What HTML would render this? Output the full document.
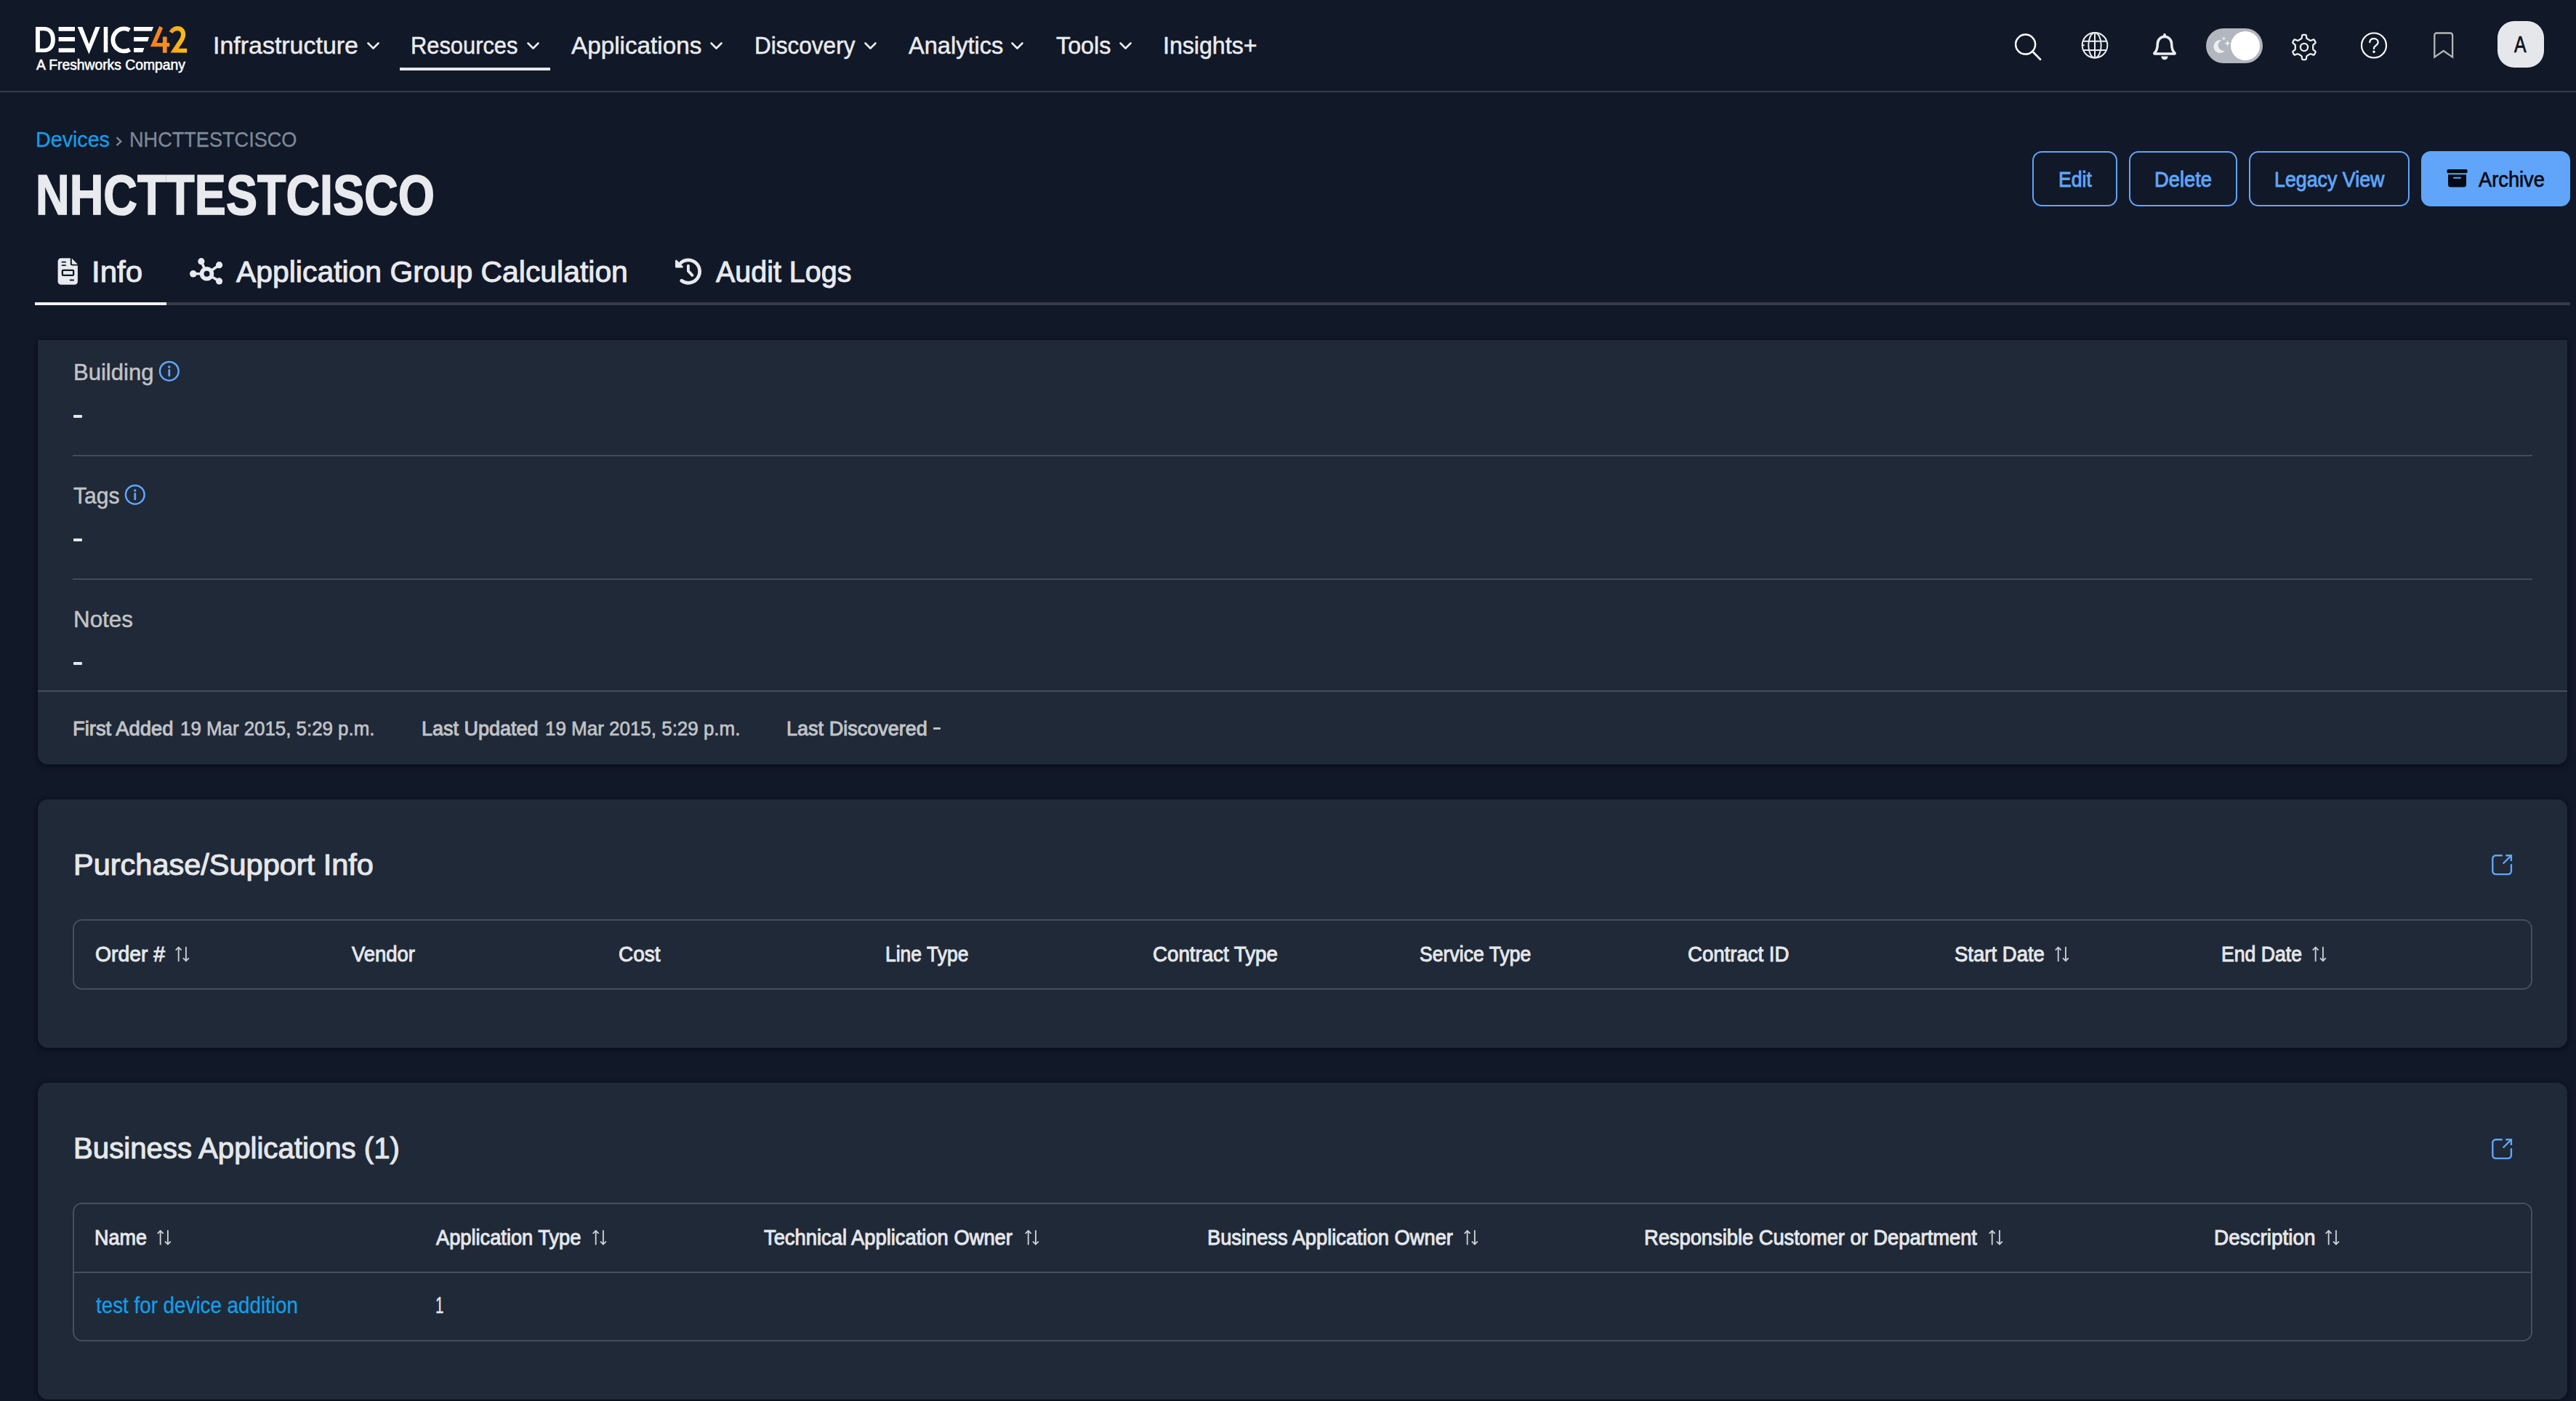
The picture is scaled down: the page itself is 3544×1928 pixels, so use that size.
<!DOCTYPE html>
<html lang="en"><head><meta charset="utf-8"><title>NHCTTESTCISCO - Device42</title>
<style>
html,body{margin:0;padding:0;}
body{width:3544px;height:1928px;overflow:hidden;position:relative;background:#111827;font-family:"Liberation Sans",sans-serif;}
.t{position:absolute;white-space:nowrap;transform-origin:0 50%;display:block;font-family:"Liberation Sans",sans-serif;}
.a{position:absolute;display:block;}
svg{position:absolute;overflow:visible;display:block;}
.card{position:absolute;left:52px;width:3480px;background:#1f2937;box-shadow:0 3px 9px rgba(3,7,18,.5),0 0 5px rgba(3,7,18,.22);}
.hr{position:absolute;height:2px;background:#434b5a;}
.tbl{position:absolute;left:100px;width:3384px;box-sizing:border-box;border:2px solid #464e5d;border-radius:13px;}
.btn{position:absolute;top:208px;height:76px;box-sizing:border-box;border:2px solid #60a5fa;border-radius:13px;}
.dash{position:absolute;left:101px;width:12px;height:4px;background:#e5e7eb;border-radius:1px;}

</style></head><body>
<!-- header -->
<div class="a" style="left:0;top:0;width:3544px;height:125px;background:#111827;border-bottom:2px solid #353b4a;"></div>
<!-- logo -->
<svg id="logo" style="left:49px;top:36px" width="210" height="40" viewBox="0 0 210 40">
 <defs><linearGradient id="lg" gradientUnits="userSpaceOnUse" x1="158" y1="0" x2="208" y2="0"><stop offset="0" stop-color="#f47a22"/><stop offset="0.5" stop-color="#f7941d"/><stop offset="0.62" stop-color="#f9a61a"/><stop offset="1" stop-color="#fdc30e"/></linearGradient></defs>
 <g fill="#fff">
  <path fill-rule="evenodd" d="M0 0.900H11.500C21.500 0.900 26.900 7.800 26.900 18.500C26.900 29.200 21.500 36.100 11.500 36.100H0ZM5.900 6.200V30.700H11.300C17.600 30.700 21 26 21 18.400C21 10.800 17.600 6.200 11.300 6.200Z"/>
  <rect x="31.600" y="1" width="22.400" height="5.800"/><rect x="31.600" y="15" width="22.400" height="5.900"/><rect x="31.600" y="30.300" width="22.400" height="5.800"/>
  <path d="M57.600 1H64.400L73.400 24.400L82.400 1H88.800L73.400 38.500Z"/>
  <rect x="93.700" y="1" width="5.600" height="35.100"/>
  <path d="M129.300 5.500A15.300 15.500 0 1 0 129.600 32.200" fill="none" stroke="#fff" stroke-width="5.800"/>
  <path d="M135.100 1H162.050L159.900 6.850H135.100Z"/><path d="M135.100 15.050H156L154.200 20.950H135.100Z"/><path d="M135.100 30.100H149.400L147.400 36.100H135.100Z"/>
 </g>
 <g fill="url(#lg)">
 <path d="M170.300 -0.300L175.100 2.400L166.300 22.900H174.900V14.500H180.600V22.900H184.200V28.300H180.600V36.800H174.900V28.300H157.900Z"/>
 <path d="M183.800 7.200C186.300 2.600 190.300 -0.100 195.400 -0.100C201.800 -0.100 206.200 4.600 206.200 11.200C206.200 15.600 204.300 19.400 201.200 24L196.600 30.800H208.100V36.600H185.400L196 20.500C198.600 16.800 200 14.200 200 11.400C200 8.200 198 6.200 194.900 6.200C192.100 6.200 190 7.600 188.500 10.100Z"/>
 </g>
</svg>
<!-- nav chevrons -->
<svg style="left:505px;top:58px" width="17" height="11" viewBox="0 0 17 11"><path d="M1.500 1.500l7 7 7-7" fill="none" stroke="#eceef1" stroke-width="2.600" stroke-linecap="round" stroke-linejoin="round"/></svg>
<svg style="left:724.500px;top:58px" width="17" height="11" viewBox="0 0 17 11"><path d="M1.500 1.500l7 7 7-7" fill="none" stroke="#eceef1" stroke-width="2.600" stroke-linecap="round" stroke-linejoin="round"/></svg>
<svg style="left:977px;top:58px" width="17" height="11" viewBox="0 0 17 11"><path d="M1.500 1.500l7 7 7-7" fill="none" stroke="#eceef1" stroke-width="2.600" stroke-linecap="round" stroke-linejoin="round"/></svg>
<svg style="left:1188.500px;top:58px" width="17" height="11" viewBox="0 0 17 11"><path d="M1.500 1.500l7 7 7-7" fill="none" stroke="#eceef1" stroke-width="2.600" stroke-linecap="round" stroke-linejoin="round"/></svg>
<svg style="left:1390.500px;top:58px" width="17" height="11" viewBox="0 0 17 11"><path d="M1.500 1.500l7 7 7-7" fill="none" stroke="#eceef1" stroke-width="2.600" stroke-linecap="round" stroke-linejoin="round"/></svg>
<svg style="left:1540px;top:58px" width="17" height="11" viewBox="0 0 17 11"><path d="M1.500 1.500l7 7 7-7" fill="none" stroke="#eceef1" stroke-width="2.600" stroke-linecap="round" stroke-linejoin="round"/></svg>
<!-- active nav underline -->
<div class="a" style="left:550px;top:93px;width:207px;height:4px;background:#e5e7eb;"></div>
<!-- header icons -->
<svg id="ic-search" style="left:2770px;top:44px" width="40" height="40" viewBox="0 0 40 40"><circle cx="16.600" cy="17.100" r="13.500" fill="none" stroke="#fff" stroke-width="2.500"/><path d="M26.300 26.800L37 37.700" stroke="#fff" stroke-width="2.700" stroke-linecap="round"/></svg>
<svg id="ic-globe" style="left:2863px;top:43px" width="38" height="38" viewBox="0 0 38 38"><g fill="none" stroke="#eceef1" stroke-width="2"><circle cx="19" cy="19.200" r="17.300"/><ellipse cx="19" cy="19.200" rx="8.700" ry="17.300"/><path d="M19 1.900v34.600M2.8 13.8h32.4M2.8 25.9h32.4M1.700 19.200h3"/></g></svg>
<svg id="ic-bell" style="left:2961px;top:45px" width="34" height="38" viewBox="0 0 34 38"><path d="M17 5.600c-5.800 0-9.700 4.300-9.700 10.100 0 6-1.300 9.500-4.300 12.300-.4.400-.1 1.100.5 1.100h27c.6 0 .9-.7.500-1.100-3-2.800-4.300-6.300-4.300-12.300 0-5.800-3.900-10.100-9.700-10.100z" fill="none" stroke="#eceef1" stroke-width="3.500" stroke-linejoin="round"/><path d="M17 2.900v2" stroke="#eceef1" stroke-width="3.800" stroke-linecap="round"/><path d="M12.300 32.600h9.400a4.700 4.700 0 0 1-9.400 0z" fill="#eceef1"/></svg>
<div class="a" style="left:3035px;top:39px;width:78px;height:48px;border-radius:24px;background:#b2b6be;"></div>
<div class="a" style="left:3069px;top:43px;width:40px;height:40px;border-radius:20px;background:#fff;"></div>
<svg id="ic-moon" style="left:3043.6px;top:48.5px" width="30" height="28" viewBox="0 0 30 28"><path d="M12.500 6.400A8.900 8.900 0 1 0 17.300 20.600 7.500 7.500 0 0 1 12.500 6.400z" fill="#eceef1"/><path d="M15.500 1l.8 2.200 2.200.8-2.200.8-.8 2.200-.8-2.200-2.200-.8 2.200-.8zM20.500 6.200l1.200 3.200 3.200 1.200-3.200 1.200-1.200 3.200-1.200-3.200-3.200-1.200 3.200-1.200z" fill="#eceef1"/></svg>
<svg id="ic-gear" style="left:3152px;top:46px" width="36" height="38" viewBox="-18 -19 36 38"><path id="gearp" d="M-4.39 -11.52Q-3.26 -12.17 -3.14 -13.46L-2.92 -15.78Q-2.80 -17.07 -1.50 -17.07L1.50 -17.07Q2.80 -17.07 2.92 -15.78L3.14 -13.46Q3.26 -12.17 4.39 -11.52L7.78 -9.56Q8.91 -8.91 10.09 -9.45L12.21 -10.42Q13.39 -10.96 14.04 -9.83L15.53 -7.24Q16.18 -6.12 15.12 -5.36L13.23 -4.01Q12.17 -3.26 12.17 -1.96L12.17 1.96Q12.17 3.26 13.23 4.01L15.12 5.36Q16.18 6.12 15.53 7.24L14.04 9.83Q13.39 10.96 12.21 10.42L10.09 9.45Q8.91 8.91 7.78 9.56L4.39 11.52Q3.26 12.17 3.14 13.46L2.92 15.78Q2.80 17.07 1.50 17.07L-1.50 17.07Q-2.80 17.07 -2.92 15.78L-3.14 13.46Q-3.26 12.17 -4.39 11.52L-7.78 9.56Q-8.91 8.91 -10.09 9.45L-12.21 10.42Q-13.39 10.96 -14.04 9.83L-15.53 7.24Q-16.18 6.12 -15.12 5.36L-13.23 4.01Q-12.17 3.26 -12.17 1.96L-12.17 -1.96Q-12.17 -3.26 -13.23 -4.01L-15.12 -5.36Q-16.18 -6.12 -15.53 -7.24L-14.04 -9.83Q-13.39 -10.96 -12.21 -10.42L-10.09 -9.45Q-8.91 -8.91 -7.78 -9.56Z" fill="none" stroke="#eceef1" stroke-width="2.300" stroke-linejoin="round"/><circle cx="0" cy="0" r="5.1" fill="none" stroke="#eceef1" stroke-width="2.3"/></svg>
<svg id="ic-help" style="left:3247px;top:44px" width="38" height="38" viewBox="0 0 38 38"><circle cx="19" cy="18.500" r="17" fill="none" stroke="#fff" stroke-width="2.200"/><path d="M13.200 14.200c.3-3 2.600-5 5.800-5 3.300 0 5.700 2 5.700 4.900 0 2.300-1.300 3.500-3.100 4.600-1.800 1.100-2.600 2-2.600 3.800v.6" fill="none" stroke="#fff" stroke-width="2.200" stroke-linecap="round"/><circle cx="19" cy="27.300" r="1.700" fill="#fff"/></svg>
<svg id="ic-bm" style="left:3347px;top:43px" width="30" height="40" viewBox="0 0 30 40"><path d="M2.3 35.6V5.5a3 3 0 0 1 3-3h18.800a3 3 0 0 1 3 3v30.1l-12.4-8.6z" fill="none" stroke="#b5b5b5" stroke-width="2.300" stroke-linejoin="miter"/></svg>
<div class="a" style="left:3436px;top:29px;width:64px;height:64px;border-radius:23px;background:#e5e7eb;"></div>

<svg style="left:158px;top:187px" width="12" height="16" viewBox="0 0 12 16"><path d="M2.500 2.200l5.900 5.500-5.900 5.500" fill="none" stroke="#7c8a97" stroke-width="2.300"/></svg>
<!-- buttons -->
<div class="btn" style="left:2796px;width:117px;"></div>
<div class="btn" style="left:2929px;width:149px;"></div>
<div class="btn" style="left:3094px;width:221px;"></div>
<div class="btn" style="left:3331px;width:205px;background:#60a5fa;"></div>
<svg id="ic-arch" style="left:3366px;top:232px" width="30" height="27" viewBox="0 0 30 27"><rect x="0.400" y="1" width="28.200" height="5.300" rx="1.800" fill="#050a16"/><path d="M2 8.300h25v13.700a3.500 3.500 0 0 1-3.500 3.500h-18a3.500 3.500 0 0 1-3.500-3.500zM10 11.700a1 1 0 0 0 0 2h9a1 1 0 0 0 0-2z" fill="#050a16" fill-rule="evenodd"/></svg>

<!-- tabs -->
<div class="a" style="left:48px;top:416px;width:3488px;height:4px;background:#353b4a;"></div>
<div class="a" style="left:48px;top:416px;width:181px;height:4px;background:#f0f1f3;"></div>
<svg id="ic-file" style="left:79px;top:355px" width="29" height="37" viewBox="0 0 29 37"><path fill-rule="evenodd" fill="#e8eaee" d="M5 0.200h12.800v7.600a2.600 2.600 0 0 0 2.600 2.600h7.500v22a4.400 4.400 0 0 1-4.400 4.400H5a4.400 4.400 0 0 1-4.400-4.400V4.600A4.400 4.400 0 0 1 5 0.200zM6.500 4.800a.9.900 0 0 0 0 1.800h4.600a.9.900 0 0 0 0-1.800zM6.500 9.200a.9.900 0 0 0 0 1.800h4.600a.9.900 0 0 0 0-1.800zM8 15.800a2.300 2.300 0 0 0-2.300 2.300v4.600A2.300 2.300 0 0 0 8 25h13a2.300 2.300 0 0 0 2.300-2.300v-4.600a2.300 2.300 0 0 0-2.300-2.300zM8 18.100h13v4.600H8zM17.600 29.600a.9.900 0 0 0 0 1.800h4.600a.9.900 0 0 0 0-1.800z"/><path fill="#e8eaee" d="M19.800 0.600l8 8.100h-6.600a1.400 1.400 0 0 1-1.400-1.400z"/></svg>
<svg id="ic-nodes" style="left:260px;top:354px" width="48" height="39" viewBox="0 0 48 39"><g stroke="#e8eaee" stroke-width="3.600" stroke-linecap="round"><path d="M24.500 22.800L16.900 5.700M24.500 22.800L41.600 10.700M24.500 22.800H5.800M24.500 22.800L41.600 32.900"/></g><circle cx="24.5" cy="22.8" r="6.9" fill="#111827" stroke="#e8eaee" stroke-width="5.8"/><g fill="#e8eaee"><circle cx="16.900" cy="5.700" r="4.600"/><circle cx="41.600" cy="10.700" r="4.600"/><circle cx="5.800" cy="22.800" r="4.800"/><circle cx="41.600" cy="32.900" r="4.600"/></g></svg>
<svg id="ic-hist" style="left:928px;top:354px" width="40" height="40" viewBox="0 0 40 40"><path d="M8.6 7.75A15.7 15.7 0 1 1 9.7 32.3" fill="none" stroke="#e8eaee" stroke-width="4.8" stroke-linecap="round"/><path d="M1 4.9a1.3 1.3 0 0 1 2.2-.9l8.400 8.400a1.3 1.3 0 0 1-.9 2.2H2.3A1.3 1.3 0 0 1 1 13.300z" fill="#e8eaee"/><path d="M18.9 11.8v7.100l5.500 5.900" fill="none" stroke="#e8eaee" stroke-width="3.900" stroke-linecap="round" stroke-linejoin="round"/></svg>

<!-- card 1 -->
<div class="card" style="top:468px;height:584px;border-radius:0 0 14px 14px;"></div>
<div class="hr" style="left:100px;top:626px;width:3384px;"></div>
<div class="hr" style="left:100px;top:796px;width:3384px;"></div>
<div class="hr" style="left:52px;top:950px;width:3480px;background:#474e5d"></div>
<div class="dash" style="top:570.500px"></div><div class="dash" style="top:740.500px"></div><div class="dash" style="top:910.500px"></div>
<div class="dash" style="left:1284.400px;top:1000.500px;width:9.500px;height:3.500px;background:#c1c3c8"></div>
<svg class="info" style="left:218px;top:496px" width="30" height="30" viewBox="0 0 30 30"><circle cx="14.800" cy="14.800" r="12.850" fill="none" stroke="#60a5fa" stroke-width="2.500"/><circle cx="14.800" cy="8.900" r="1.750" fill="#60a5fa"/><path d="M14.8 13.5v7.400" stroke="#60a5fa" stroke-width="2.8" stroke-linecap="round"/></svg>
<svg class="info" style="left:171.400px;top:666px" width="30" height="30" viewBox="0 0 30 30"><circle cx="14.800" cy="14.800" r="12.850" fill="none" stroke="#60a5fa" stroke-width="2.500"/><circle cx="14.800" cy="8.900" r="1.750" fill="#60a5fa"/><path d="M14.8 13.5v7.400" stroke="#60a5fa" stroke-width="2.8" stroke-linecap="round"/></svg>

<!-- card 2 -->
<div class="card" style="top:1100px;height:341.500px;border-radius:14px;"></div>
<div class="tbl" style="top:1265px;height:97px;"></div>
<svg class="ext" style="left:3428px;top:1176.2px" width="29" height="29" viewBox="0 0 29 29"><g fill="none" stroke="#60a5fa" stroke-width="2.4" stroke-linecap="butt" stroke-linejoin="round"><path d="M14.800 1.300H5.600A4.300 4.300 0 0 0 1.300 5.600V22.800a4.300 4.300 0 0 0 4.300 4.300H22.600a4.300 4.300 0 0 0 4.300-4.300V13.200"/><path d="M15.700 12.500L26.800 1.400" stroke-linecap="butt"/><path d="M19.300 1.300h7.600v7.600" stroke-linecap="butt" stroke-linejoin="miter"/></g></svg>

<!-- card 3 -->
<div class="card" style="top:1490.4px;height:436.1px;border-radius:14px;"></div>
<div class="tbl" style="top:1655px;height:191px;"></div>
<div class="hr" style="left:102px;top:1749.500px;width:3380px;background:#464e5d"></div>
<svg class="ext" style="left:3428px;top:1566.6px" width="29" height="29" viewBox="0 0 29 29"><g fill="none" stroke="#60a5fa" stroke-width="2.4" stroke-linecap="butt" stroke-linejoin="round"><path d="M14.800 1.300H5.600A4.300 4.300 0 0 0 1.300 5.600V22.800a4.300 4.300 0 0 0 4.300 4.300H22.600a4.300 4.300 0 0 0 4.300-4.300V13.200"/><path d="M15.700 12.500L26.800 1.400" stroke-linecap="butt"/><path d="M19.300 1.300h7.600v7.600" stroke-linecap="butt" stroke-linejoin="miter"/></g></svg>
<svg class="sort" style="left:241.2px;top:1302.3px" width="20" height="22" viewBox="0 0 20 22"><g fill="none" stroke="#c9cdd4" stroke-width="1.900" stroke-linecap="round" stroke-linejoin="round"><path d="M4.700 20.400V1.600M1.250 5.050l3.450-3.450 3.450 3.450"/><path d="M14.900 1.600v18.800M11.450 16.950l3.450 3.450 3.450-3.450"/></g></svg>
<svg class="sort" style="left:2826.6px;top:1302.3px" width="20" height="22" viewBox="0 0 20 22"><g fill="none" stroke="#c9cdd4" stroke-width="1.900" stroke-linecap="round" stroke-linejoin="round"><path d="M4.700 20.400V1.600M1.250 5.050l3.450-3.450 3.450 3.450"/><path d="M14.900 1.600v18.800M11.450 16.950l3.450 3.450 3.450-3.450"/></g></svg>
<svg class="sort" style="left:3181.4px;top:1302.3px" width="20" height="22" viewBox="0 0 20 22"><g fill="none" stroke="#c9cdd4" stroke-width="1.900" stroke-linecap="round" stroke-linejoin="round"><path d="M4.700 20.400V1.600M1.250 5.050l3.450-3.450 3.450 3.450"/><path d="M14.900 1.600v18.800M11.450 16.950l3.450 3.450 3.450-3.450"/></g></svg>
<svg class="sort" style="left:216.0px;top:1692.4px" width="20" height="22" viewBox="0 0 20 22"><g fill="none" stroke="#c9cdd4" stroke-width="1.900" stroke-linecap="round" stroke-linejoin="round"><path d="M4.700 20.400V1.600M1.250 5.050l3.450-3.450 3.450 3.450"/><path d="M14.900 1.600v18.800M11.450 16.950l3.450 3.450 3.450-3.450"/></g></svg>
<svg class="sort" style="left:814.7px;top:1692.4px" width="20" height="22" viewBox="0 0 20 22"><g fill="none" stroke="#c9cdd4" stroke-width="1.900" stroke-linecap="round" stroke-linejoin="round"><path d="M4.700 20.400V1.600M1.250 5.050l3.450-3.450 3.450 3.450"/><path d="M14.900 1.600v18.800M11.450 16.950l3.450 3.450 3.450-3.450"/></g></svg>
<svg class="sort" style="left:1409.6px;top:1692.4px" width="20" height="22" viewBox="0 0 20 22"><g fill="none" stroke="#c9cdd4" stroke-width="1.900" stroke-linecap="round" stroke-linejoin="round"><path d="M4.700 20.400V1.600M1.250 5.050l3.450-3.450 3.450 3.450"/><path d="M14.900 1.600v18.800M11.450 16.950l3.450 3.450 3.450-3.450"/></g></svg>
<svg class="sort" style="left:2014.2px;top:1692.4px" width="20" height="22" viewBox="0 0 20 22"><g fill="none" stroke="#c9cdd4" stroke-width="1.900" stroke-linecap="round" stroke-linejoin="round"><path d="M4.700 20.400V1.600M1.250 5.050l3.450-3.450 3.450 3.450"/><path d="M14.900 1.600v18.800M11.450 16.950l3.450 3.450 3.450-3.450"/></g></svg>
<svg class="sort" style="left:2735.8px;top:1692.4px" width="20" height="22" viewBox="0 0 20 22"><g fill="none" stroke="#c9cdd4" stroke-width="1.900" stroke-linecap="round" stroke-linejoin="round"><path d="M4.700 20.400V1.600M1.250 5.050l3.450-3.450 3.450 3.450"/><path d="M14.900 1.600v18.800M11.450 16.950l3.450 3.450 3.450-3.450"/></g></svg>
<svg class="sort" style="left:3199.0px;top:1692.4px" width="20" height="22" viewBox="0 0 20 22"><g fill="none" stroke="#c9cdd4" stroke-width="1.900" stroke-linecap="round" stroke-linejoin="round"><path d="M4.700 20.400V1.600M1.250 5.050l3.450-3.450 3.450 3.450"/><path d="M14.900 1.600v18.800M11.450 16.950l3.450 3.450 3.450-3.450"/></g></svg>

<span class="t" style="left:50.10px;top:80.42px;font-size:19.5px;line-height:19.5px;color:#ffffff;transform:scaleX(0.9899);-webkit-text-stroke:0.55px #ffffff;">A Freshworks Company</span>
<span class="t" style="left:293.05px;top:46.25px;font-size:33px;line-height:33px;color:#e9ebef;transform:scaleX(1.0284);-webkit-text-stroke:0.5px #e9ebef;">Infrastructure</span>
<span class="t" style="left:564.59px;top:46.25px;font-size:33px;line-height:33px;color:#e9ebef;transform:scaleX(0.9346);-webkit-text-stroke:0.5px #e9ebef;">Resources</span>
<span class="t" style="left:785.60px;top:46.25px;font-size:33px;line-height:33px;color:#e9ebef;transform:scaleX(1.0082);-webkit-text-stroke:0.5px #e9ebef;">Applications</span>
<span class="t" style="left:1037.59px;top:46.25px;font-size:33px;line-height:33px;color:#e9ebef;transform:scaleX(0.9555);-webkit-text-stroke:0.5px #e9ebef;">Discovery</span>
<span class="t" style="left:1249.60px;top:46.25px;font-size:33px;line-height:33px;color:#e9ebef;transform:scaleX(0.9874);-webkit-text-stroke:0.5px #e9ebef;">Analytics</span>
<span class="t" style="left:1453.10px;top:46.25px;font-size:33px;line-height:33px;color:#e9ebef;transform:scaleX(0.9787);-webkit-text-stroke:0.5px #e9ebef;">Tools</span>
<span class="t" style="left:1599.56px;top:46.25px;font-size:33px;line-height:33px;color:#e9ebef;transform:scaleX(0.9735);-webkit-text-stroke:0.5px #e9ebef;">Insights+</span>
<span class="t" style="left:3459.47px;top:45.65px;font-size:31px;line-height:31px;color:#0b0f19;transform:scaleX(0.8010);-webkit-text-stroke:0.7px #0b0f19;">A</span>
<span class="t" style="left:49.07px;top:178.08px;font-size:29.2px;line-height:29.2px;color:#129fe9;transform:scaleX(0.9820);-webkit-text-stroke:0.3px #129fe9;">Devices</span>
<span class="t" style="left:177.59px;top:178.08px;font-size:29.2px;line-height:29.2px;color:#7c8a97;transform:scaleX(0.9287);-webkit-text-stroke:0.3px #7c8a97;">NHCTTESTCISCO</span>
<span class="t" style="left:49.08px;top:230.32px;font-size:77.5px;line-height:77.5px;color:#e8eaee;transform:scaleX(0.8333);font-weight:bold;-webkit-text-stroke:1.6px #e8eaee;">NHCTTESTCISCO</span>
<span class="t" style="left:125.99px;top:354.28px;font-size:41.2px;line-height:41.2px;color:#e8eaee;transform:scaleX(1.0196);-webkit-text-stroke:1.0px #e8eaee;">Info</span>
<span class="t" style="left:325.10px;top:354.28px;font-size:41.2px;line-height:41.2px;color:#e8eaee;transform:scaleX(0.9931);-webkit-text-stroke:1.0px #e8eaee;">Application Group Calculation</span>
<span class="t" style="left:985.10px;top:354.28px;font-size:41.2px;line-height:41.2px;color:#e8eaee;transform:scaleX(0.9577);-webkit-text-stroke:1.0px #e8eaee;">Audit Logs</span>
<span class="t" style="left:2831.59px;top:233.35px;font-size:29px;line-height:29px;color:#60a5fa;transform:scaleX(0.9185);-webkit-text-stroke:0.9px #60a5fa;">Edit</span>
<span class="t" style="left:2963.58px;top:233.35px;font-size:29px;line-height:29px;color:#60a5fa;transform:scaleX(0.9416);-webkit-text-stroke:0.9px #60a5fa;">Delete</span>
<span class="t" style="left:3128.59px;top:233.35px;font-size:29px;line-height:29px;color:#60a5fa;transform:scaleX(0.9237);-webkit-text-stroke:0.9px #60a5fa;">Legacy View</span>
<span class="t" style="left:3410.09px;top:233.35px;font-size:29px;line-height:29px;color:#050a16;transform:scaleX(0.9400);-webkit-text-stroke:0.7px #050a16;">Archive</span>
<span class="t" style="left:100.57px;top:496.94px;font-size:31.6px;line-height:31.6px;color:#c1c3c8;transform:scaleX(0.9827);-webkit-text-stroke:0.5px #c1c3c8;">Building</span>
<span class="t" style="left:100.60px;top:666.94px;font-size:31.6px;line-height:31.6px;color:#c1c3c8;transform:scaleX(0.9499);-webkit-text-stroke:0.5px #c1c3c8;">Tags</span>
<span class="t" style="left:100.58px;top:836.94px;font-size:31.6px;line-height:31.6px;color:#c1c3c8;transform:scaleX(0.9926);-webkit-text-stroke:0.5px #c1c3c8;">Notes</span>
<span class="t" style="left:100.09px;top:989.01px;font-size:27.4px;line-height:27.4px;color:#c1c3c8;transform:scaleX(0.9991);-webkit-text-stroke:1.0px #c1c3c8;">First Added</span>
<span class="t" style="left:248.10px;top:989.01px;font-size:27.4px;line-height:27.4px;color:#c1c3c8;transform:scaleX(0.9442);-webkit-text-stroke:0.7px #c1c3c8;">19 Mar 2015, 5:29 p.m.</span>
<span class="t" style="left:579.58px;top:989.01px;font-size:27.4px;line-height:27.4px;color:#c1c3c8;transform:scaleX(0.9845);-webkit-text-stroke:1.0px #c1c3c8;">Last Updated</span>
<span class="t" style="left:750.10px;top:989.01px;font-size:27.4px;line-height:27.4px;color:#c1c3c8;transform:scaleX(0.9478);-webkit-text-stroke:0.7px #c1c3c8;">19 Mar 2015, 5:29 p.m.</span>
<span class="t" style="left:1081.59px;top:989.01px;font-size:27.4px;line-height:27.4px;color:#c1c3c8;transform:scaleX(0.9874);-webkit-text-stroke:1.0px #c1c3c8;">Last Discovered</span>
<span class="t" style="left:101.08px;top:1169.88px;font-size:41.2px;line-height:41.2px;color:#e5e7eb;transform:scaleX(1.0075);-webkit-text-stroke:1.1px #e5e7eb;">Purchase/Support Info</span>
<span class="t" style="left:101.08px;top:1559.88px;font-size:41.2px;line-height:41.2px;color:#e5e7eb;transform:scaleX(0.9756);-webkit-text-stroke:1.1px #e5e7eb;">Business Applications (1)</span>
<span class="t" style="left:130.61px;top:1298.34px;font-size:29.6px;line-height:29.6px;color:#e5e7eb;transform:scaleX(0.9561);-webkit-text-stroke:1.0px #e5e7eb;">Order #</span>
<span class="t" style="left:484.09px;top:1298.34px;font-size:29.6px;line-height:29.6px;color:#e5e7eb;transform:scaleX(0.9266);-webkit-text-stroke:1.0px #e5e7eb;">Vendor</span>
<span class="t" style="left:850.60px;top:1298.34px;font-size:29.6px;line-height:29.6px;color:#e5e7eb;transform:scaleX(0.9433);-webkit-text-stroke:1.0px #e5e7eb;">Cost</span>
<span class="t" style="left:1218.09px;top:1298.34px;font-size:29.6px;line-height:29.6px;color:#e5e7eb;transform:scaleX(0.8953);-webkit-text-stroke:1.0px #e5e7eb;">Line Type</span>
<span class="t" style="left:1585.60px;top:1298.34px;font-size:29.6px;line-height:29.6px;color:#e5e7eb;transform:scaleX(0.9358);-webkit-text-stroke:1.0px #e5e7eb;">Contract Type</span>
<span class="t" style="left:1953.10px;top:1298.34px;font-size:29.6px;line-height:29.6px;color:#e5e7eb;transform:scaleX(0.8995);-webkit-text-stroke:1.0px #e5e7eb;">Service Type</span>
<span class="t" style="left:2321.60px;top:1298.34px;font-size:29.6px;line-height:29.6px;color:#e5e7eb;transform:scaleX(0.9314);-webkit-text-stroke:1.0px #e5e7eb;">Contract ID</span>
<span class="t" style="left:2688.60px;top:1298.34px;font-size:29.6px;line-height:29.6px;color:#e5e7eb;transform:scaleX(0.9300);-webkit-text-stroke:1.0px #e5e7eb;">Start Date</span>
<span class="t" style="left:3055.58px;top:1298.34px;font-size:29.6px;line-height:29.6px;color:#e5e7eb;transform:scaleX(0.8990);-webkit-text-stroke:1.0px #e5e7eb;">End Date</span>
<span class="t" style="left:130.07px;top:1688.44px;font-size:29.6px;line-height:29.6px;color:#e5e7eb;transform:scaleX(0.9111);-webkit-text-stroke:1.0px #e5e7eb;">Name</span>
<span class="t" style="left:599.60px;top:1688.44px;font-size:29.6px;line-height:29.6px;color:#e5e7eb;transform:scaleX(0.9205);-webkit-text-stroke:1.0px #e5e7eb;">Application Type</span>
<span class="t" style="left:1051.10px;top:1688.44px;font-size:29.6px;line-height:29.6px;color:#e5e7eb;transform:scaleX(0.9238);-webkit-text-stroke:1.0px #e5e7eb;">Technical Application Owner</span>
<span class="t" style="left:1661.10px;top:1688.44px;font-size:29.6px;line-height:29.6px;color:#e5e7eb;transform:scaleX(0.9211);-webkit-text-stroke:1.0px #e5e7eb;">Business Application Owner</span>
<span class="t" style="left:2261.60px;top:1688.44px;font-size:29.6px;line-height:29.6px;color:#e5e7eb;transform:scaleX(0.9218);-webkit-text-stroke:1.0px #e5e7eb;">Responsible Customer or Department</span>
<span class="t" style="left:3045.59px;top:1688.44px;font-size:29.6px;line-height:29.6px;color:#e5e7eb;transform:scaleX(0.9419);-webkit-text-stroke:1.0px #e5e7eb;">Description</span>
<span class="t" style="left:131.60px;top:1780.58px;font-size:30.5px;line-height:30.5px;color:#129fe9;transform:scaleX(0.9106);-webkit-text-stroke:0.3px #129fe9;">test for device addition</span>
<span class="t" style="left:598.61px;top:1780.58px;font-size:30.5px;line-height:30.5px;color:#e5e7eb;transform:scaleX(0.6754);-webkit-text-stroke:0.4px #e5e7eb;">1</span>
</body></html>
